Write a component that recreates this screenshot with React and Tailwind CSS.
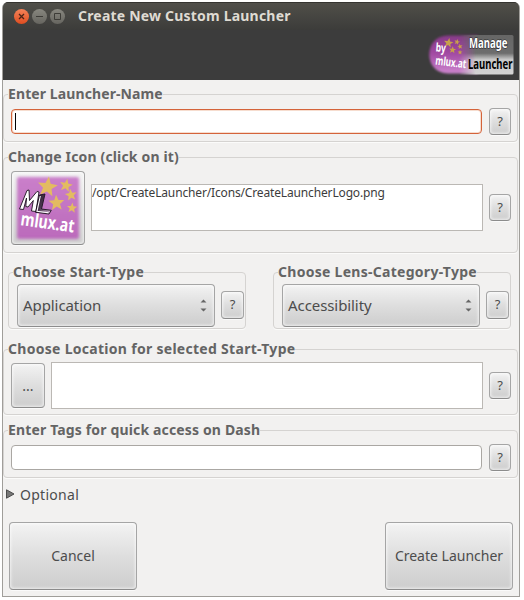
import React from "react";

const face = "bg-gradient-to-b from-[#f3f3f3] via-[#dedede] to-[#cdcdcd] border border-[#a5a5a5] border-b-[#8c8c8c] rounded-[4px] text-[#4c4c4c] shadow-[inset_0_0_3px_1px_rgba(255,255,255,0.65),0_1px_0_#fafafa]";

function Star({ x, y, r, rot = 0, fill }) {
  const points = Array.from({ length: 10 }, (_, i) => {
    const a = (Math.PI / 5) * i - Math.PI / 2 + (rot * Math.PI) / 180;
    const d = i % 2 ? r * 0.43 : r;
    return `${(x + d * Math.cos(a)).toFixed(2)},${(y + d * Math.sin(a)).toFixed(2)}`;
  }).join(" ");
  return <polygon points={points} fill={fill} />;
}

function Banner() {
  return (
    <svg width="86" height="42" viewBox="0 0 86 42" className="block overflow-visible">
      <defs>
        <linearGradient id="bp" x1="0" y1="0" x2="0" y2="1">
          <stop offset="0" stopColor="#873a88" />
          <stop offset="0.45" stopColor="#a048a1" />
          <stop offset="1" stopColor="#cd85ce" />
        </linearGradient>
        <linearGradient id="bg" x1="0" y1="0" x2="0" y2="1">
          <stop offset="0" stopColor="#666" />
          <stop offset="0.46" stopColor="#6d6d6d" />
          <stop offset="0.62" stopColor="#c8c8c8" />
          <stop offset="1" stopColor="#d4d4d4" />
        </linearGradient>
        <linearGradient id="fade" x1="0" x2="1">
          <stop offset="0" stopColor="#fff" stopOpacity="0" />
          <stop offset="0.3" stopColor="#fff" />
        </linearGradient>
        <mask id="bm"><rect x="30" width="56" height="42" fill="url(#fade)" /></mask>
        <filter id="soft"><feGaussianBlur stdDeviation="0.9" /></filter>
      </defs>
      <path d="M19 1.5H49V39.5H19C-6 39.5-6 1.5 19 1.5Z" fill="url(#bp)" filter="url(#soft)" />
      <rect x="30" y="1" width="54.5" height="39.5" rx="1.5" fill="url(#bg)" mask="url(#bm)" />
      <Star x={19.5} y={9} r={5} rot={10} fill="#c8a04a" />
      <Star x={28} y={8} r={3} rot={15} fill="#c8a04a" />
      <Star x={23.5} y={16} r={3.7} rot={5} fill="#c8a04a" />
      <Star x={31} y={12.5} r={2.8} rot={-10} fill="#c8a04a" />
      <Star x={31} y={18.3} r={2.5} fill="#c8a04a" />
      <g fontFamily="'Noto Sans', sans-serif" fontWeight="700">
        <text x="6.5" y="17.5" fontSize="12" fill="#fff" textLength="10" lengthAdjust="spacingAndGlyphs" transform="rotate(4 6 18)">by</text>
        <text x="6" y="30.5" fontSize="12" fill="#fff" textLength="31" lengthAdjust="spacingAndGlyphs" transform="rotate(7 6 31)">mlux.at</text>
        <text x="40" y="14" fontSize="14" fill="#fff" stroke="#222" strokeWidth="1.1" paintOrder="stroke" textLength="38.5" lengthAdjust="spacingAndGlyphs">Manage</text>
        <text x="39" y="34.5" fontSize="15" fill="#000" textLength="44.5" lengthAdjust="spacingAndGlyphs">Launcher</text>
      </g>
    </svg>
  );
}

function MluxIcon() {
  return (
    <svg width="66" height="66" viewBox="0 0 66 66" className="block overflow-visible">
      <defs>
        <linearGradient id="ip" x1="0" y1="0" x2="0" y2="1">
          <stop offset="0" stopColor="#ca7fca" />
          <stop offset="1" stopColor="#bb6abb" />
        </linearGradient>
        <linearGradient id="ml" x1="0" x2="1" y2="1">
          <stop offset="0" stopColor="#2a1d2e" />
          <stop offset="0.5" stopColor="#4a364e" />
          <stop offset="1" stopColor="#e8c9e8" />
        </linearGradient>
        <filter id="edge"><feGaussianBlur stdDeviation="1.6" /></filter>
      </defs>
      <rect x="2" y="2" width="62" height="62" rx="2" fill="url(#ip)" filter="url(#edge)" />
      <Star x={32.5} y={12} r={10.5} rot={8} fill="#e3bb61" />
      <Star x={51} y={10.5} r={6.8} rot={12} fill="#e3bb61" />
      <Star x={41.5} y={28} r={8.3} rot={-3} fill="#e3bb61" />
      <Star x={56} y={20} r={6.2} rot={-8} fill="#e3bb61" />
      <Star x={57} y={33} r={5.4} rot={5} fill="#e3bb61" />
      <path d="M4.5 34L12 15.5L14 15L14.5 25.5L22 16.5L24 17L21 36.5L16.5 36L18.3 25.5L13 32L10.8 31.5L11.5 23L8.5 34.5Z" fill="#fff" stroke="#1c121f" strokeWidth="0.9" />
      <path d="M24.5 20L30 19L26.5 34L36.3 35.3L34 39L20.5 37.3Z" fill="url(#ml)" stroke="#1c121f" strokeWidth="0.9" />
      <path d="M25.3 21L22 36.3L33.3 37.8" stroke="#fff" strokeWidth="1.1" fill="none" />
      <text x="5" y="50" fontFamily="'Noto Sans', sans-serif" fontWeight="700" fontSize="18.5" fill="#fff" textLength="54" lengthAdjust="spacingAndGlyphs" transform="rotate(8 5 50)">mlux.at</text>
    </svg>
  );
}

function Group({ title, spacing, className, children }) {
  return (
    <fieldset className={`rounded-[4px] border border-[#d5d3d1] shadow-[0_1px_0_#fbfbfa] ${className}`}>
      <legend className={`h-[19px] whitespace-nowrap text-[14px] font-bold leading-[17px] text-[#646464] ${spacing}`}>{title}</legend>
      {children}
    </fieldset>
  );
}

function Help({ className }) {
  return <button className={`${face} flex shrink-0 items-center justify-center pb-px text-[13px] leading-none ${className}`}>?</button>;
}

function Select({ value }) {
  return (
    <button className={`${face} flex h-[43px] w-[198px] shrink-0 items-center justify-between pl-[5px] pr-[7px] text-[15px] tracking-[-0.08px]`}>
      <span className="pb-px">{value}</span>
      <svg width="7" height="13" viewBox="0 0 7 13" fill="#666"><path d="M0.5 3.5L3.5 0.5L6.5 3.5ZM0.5 9.5H6.5L3.5 12.5Z" /></svg>
    </button>
  );
}

export default function App() {
  return (
    <div className="h-[600px] w-[524px] overflow-hidden bg-white pl-[2px] pt-[2px] font-['Noto_Sans',sans-serif]">
      <div className="flex h-[595px] w-[518px] flex-col overflow-hidden rounded-t-[6px] border-x border-b border-[#a09e9a] bg-[#f2f1f0]">
        <header className="-mx-px h-[78px] shrink-0 border-t border-[#353430] bg-[#3c3c3c]">
          <div className="flex h-[27px] items-center bg-gradient-to-b from-[#504f49] to-[#3c3c3a] pl-[12px]">
            <svg width="52" height="16" viewBox="0 0 52 16" fill="none">
              <defs>
                <linearGradient id="red" x1="0" y1="0" x2="0" y2="1"><stop stopColor="#f58359" /><stop offset="1" stopColor="#df4d20" /></linearGradient>
                <linearGradient id="gray" x1="0" y1="0" x2="0" y2="1"><stop stopColor="#88877f" /><stop offset="1" stopColor="#66655f" /></linearGradient>
              </defs>
              <circle cx="7.5" cy="7.5" r="7.5" fill="url(#red)" />
              <circle cx="25.5" cy="7.5" r="7.5" fill="url(#gray)" />
              <circle cx="43.5" cy="7.5" r="7.5" fill="url(#gray)" />
              <path d="M5 5L10 10M10 5L5 10" stroke="#4b2417" strokeWidth="1.3" />
              <path d="M22 7.5H29M40.5 4.5H46.5V10.5H40.5Z" stroke="#3d3c37" strokeWidth="1" />
            </svg>
            <h1 className="ml-[12px] whitespace-nowrap pb-[2px] text-[14px] font-bold leading-none tracking-[0.2px] text-[#dfdbd2]">Create New Custom Launcher</h1>
          </div>
          <div className="flex justify-end pr-[5px] pt-[4px]"><Banner /></div>
        </header>

        <main className="flex min-h-0 flex-1 flex-col pt-[5px]">
          <Group title="Enter Launcher-Name" spacing="tracking-[0.1px]" className="h-[57px] w-[515px] pl-[4px]">
            <div className="mt-[4px] flex items-center pl-[3px]">
              <div className="flex h-[25px] w-[471px] items-center rounded-[4px] border border-[#d4633a] bg-white pl-[3px] shadow-[inset_0_0_0_1px_#f6ddcf]">
                <span className="h-[17px] w-px bg-black" />
              </div>
              <Help className="ml-[7px] h-[27px] w-[22px]" />
            </div>
          </Group>

          <Group title="Change Icon (click on it)" spacing="tracking-[0.16px]" className="mt-[6px] h-[105px] w-[515px] pl-[4px]">
            <div className="mt-[4px] flex h-[74px] items-start pl-[3px]">
              <button className={`${face} flex h-[74px] w-[74px] shrink-0 items-center justify-center`}><MluxIcon /></button>
              <div className="ml-[6px] mt-[13px] h-[47px] w-[392px] whitespace-nowrap border border-[#bbb8b4] bg-white text-[12px] leading-[15px] tracking-[-0.15px] text-[#3c3c3c]">/opt/CreateLauncher/Icons/CreateLauncherLogo.png</div>
              <Help className="ml-[6px] mt-[23px] h-[27px] w-[22px]" />
            </div>
          </Group>

          <div className="mt-[10px] flex gap-[27px] pl-[5px]">
            <Group title="Choose Start-Type" spacing="tracking-[0.3px]" className="h-[66px] w-[238px] pl-[4px]">
              <div className="mt-[2px] flex h-[43px] items-start pl-[4px]">
                <Select value="Application" />
                <Help className="ml-[6px] mt-[7px] h-[28px] w-[23px]" />
              </div>
            </Group>
            <Group title="Choose Lens-Category-Type" spacing="tracking-[0.28px]" className="h-[66px] w-[238px] pl-[4px]">
              <div className="mt-[2px] flex h-[43px] items-start pl-[4px]">
                <Select value="Accessibility" />
                <Help className="ml-[6px] mt-[7px] h-[28px] w-[23px]" />
              </div>
            </Group>
          </div>

          <Group title="Choose Location for selected Start-Type" spacing="tracking-[0.29px]" className="mt-[11px] h-[75px] w-[515px] pl-[4px]">
            <div className="mt-[3px] flex items-center pl-[3px]">
              <button className={`${face} h-[45px] w-[34px] shrink-0 text-[14px]`}>...</button>
              <div className="ml-[6px] h-[47px] w-[432px] border border-[#bbb8b4] bg-white" />
              <Help className="ml-[6px] h-[27px] w-[22px]" />
            </div>
          </Group>

          <Group title="Enter Tags for quick access on Dash" spacing="tracking-[0.15px]" className="mt-[6px] h-[57px] w-[515px] pl-[4px]">
            <div className="mt-[4px] flex items-center pl-[3px]">
              <div className="h-[25px] w-[471px] rounded-[4px] border border-[#aaa7a3] bg-white" />
              <Help className="ml-[7px] h-[27px] w-[22px]" />
            </div>
          </Group>

          <div className="mt-[7px] flex h-[20px] items-center pl-[3px] text-[14px] text-[#4c4c4c]">
            <svg width="9" height="10" viewBox="0 0 9 10" className="-mt-[3px]"><path d="M0.5 0.8V9.2L8 5Z" fill="#777" stroke="#4c4c4c" /></svg>
            <span className="ml-[5px] pb-[2px] tracking-[0.28px]">Optional</span>
          </div>

          <footer className="mt-[17px] flex justify-between px-[6px] text-[14px]">
            <button className={`${face} h-[68px] w-[128px] pb-[2px]`}>Cancel</button>
            <button className={`${face} h-[68px] w-[128px] whitespace-nowrap pb-[2px]`}>Create Launcher</button>
          </footer>
        </main>
      </div>
    </div>
  );
}
